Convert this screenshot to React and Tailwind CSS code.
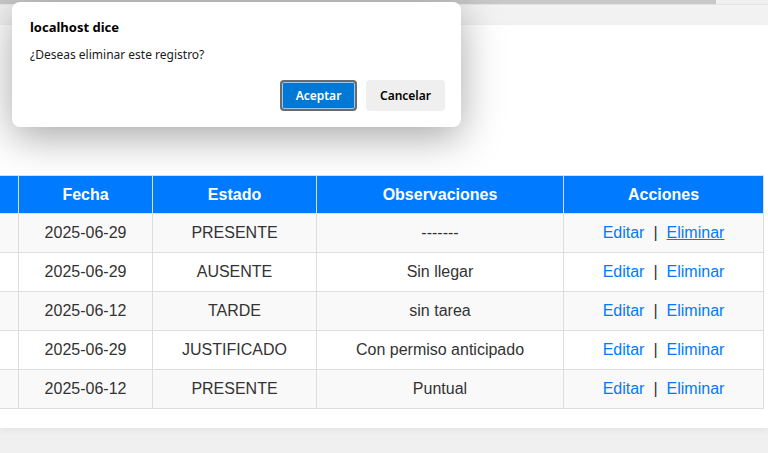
import React from "react";

const registros = [
  { fecha: "2025-06-29", estado: "PRESENTE", obs: "-------" },
  { fecha: "2025-06-29", estado: "AUSENTE", obs: "Sin llegar" },
  { fecha: "2025-06-12", estado: "TARDE", obs: "sin tarea" },
  { fecha: "2025-06-29", estado: "JUSTIFICADO", obs: "Con permiso anticipado" },
  { fecha: "2025-06-12", estado: "PRESENTE", obs: "Puntual" },
];

// Browser confirm() dialog drawn over the page
const ConfirmDialog = () => (
  <div
    className="absolute left-[12px] top-[2px] w-[449px] h-[125px] bg-white rounded-[8px] shadow-[0_10px_40px_rgba(0,0,0,0.35)] pl-[18px] pr-[16px] pt-[16px]"
    style={{ fontFamily: '"Noto Sans", "Open Sans", sans-serif' }}
  >
    <p className="text-[13px] font-bold text-black leading-[18px]">localhost dice</p>
    <p className="mt-[10px] text-[12px] text-[#1a1a1a] leading-[18px]">¿Deseas eliminar este registro?</p>
    <div className="mt-[16px] flex justify-end gap-[9px]">
      <button className="w-[77px] h-[31px] rounded-[4px] border-2 border-[#6b6b6b] bg-[#0078d4] text-white text-[12px] font-semibold shadow-[inset_0_0_0_1px_#9cc8ef]">
        Aceptar
      </button>
      <button className="w-[79px] h-[31px] rounded-[4px] bg-[#efefef] text-black text-[12px] font-semibold">
        Cancelar
      </button>
    </div>
  </div>
);

export default function App() {
  return (
    <div
      className="relative w-[768px] h-[453px] overflow-hidden bg-[#f0f0f0]"
      style={{ fontFamily: '"Liberation Sans", Arial, sans-serif' }}
    >
      <div className="h-[4px] w-[716px] bg-[#c8c8c8]" />
      <div className="h-[21px] bg-[#f2f2f2] border-t border-[#e6e6e6]" />
      <div className="bg-white h-[403px] pt-[150px] shadow-[0_2px_6px_rgba(0,0,0,0.06)] overflow-hidden">
        <table className="ml-[-100px] border-collapse text-[16px] text-[#333]">
          <thead>
            <tr className="bg-[#007bff] text-white">
              <th className="w-[118px] h-[38px] border border-[#ddd] font-bold"></th>
              <th className="w-[134px] h-[38px] border border-[#ddd] font-bold">Fecha</th>
              <th className="w-[164px] h-[38px] border border-[#ddd] font-bold">Estado</th>
              <th className="w-[247px] h-[38px] border border-[#ddd] font-bold">Observaciones</th>
              <th className="w-[200px] h-[38px] border border-[#ddd] font-bold">Acciones</th>
            </tr>
          </thead>
          <tbody>
            {registros.map((r, i) => (
              <tr key={i} className={i % 2 === 0 ? "bg-[#f9f9f9]" : "bg-white"}>
                <td className="h-[39px] border border-[#ddd]"></td>
                <td className="h-[39px] border border-[#ddd] text-center">{r.fecha}</td>
                <td className="h-[39px] border border-[#ddd] text-center">{r.estado}</td>
                <td className="h-[39px] border border-[#ddd] text-center">{r.obs}</td>
                <td className="h-[39px] border border-[#ddd] text-center">
                  <a className="text-[#007bff]">Editar</a>
                  <span className="mx-[9px]">|</span>
                  <a className={i === 0 ? "text-[#007bff] underline" : "text-[#007bff]"}>Eliminar</a>
                </td>
              </tr>
            ))}
          </tbody>
        </table>
      </div>
      <ConfirmDialog />
    </div>
  );
}
